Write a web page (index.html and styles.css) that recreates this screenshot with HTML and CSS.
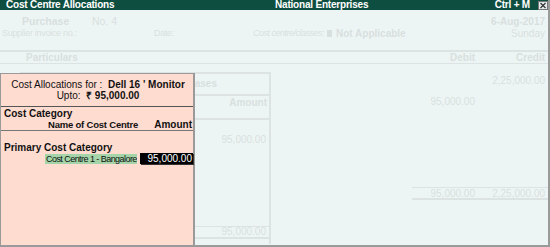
FILE: index.html
```html
<!DOCTYPE html>
<html lang="en">
<head>
    <meta charset="UTF-8">
    <title>Cost Centre Allocations</title>
    <link rel="stylesheet" href="styles.css">
</head>
<body>
    <div class="window">
        <div class="titlebar">
            <div class="tb-left">Cost Centre Allocations</div>
            <div class="tb-mid">National Enterprises</div>
            <div class="tb-right">
                <span>Ctrl + M</span>
                <span class="close-box">
                    <svg width="8" height="7" viewBox="0 0 8 7"><path d="M1.5 1 L6.5 6 M6.5 1 L1.5 6" stroke="#333" stroke-width="1.2"/></svg>
                </span>
            </div>
        </div>

        <!-- faded voucher behind the popup -->
        <div class="vch-head">
            <div class="vch-row">
                <span class="vch-type">Purchase</span>
                <span class="vch-no">No. 4</span>
                <span class="vch-date">6-Aug-2017</span>
            </div>
            <div class="vch-row small">
                <span class="supp">Supplier invoice no.:</span>
                <span class="date-lbl">Date:</span>
                <span class="cc-lbl">Cost centre/classes:</span>
                <span class="cc-box"></span>
                <span class="cc-val">Not Applicable</span>
                <span class="vch-day">Sunday</span>
            </div>
        </div>

        <div class="cols-head">
            <span class="col-part">Particulars</span>
            <span class="col-dr">Debit</span>
            <span class="col-cr">Credit</span>
        </div>

        <div class="vch-body">
            <div class="part-col">
                <div class="pb-box">
                    <div class="pb-head">Purchases</div>
                    <div class="pb-sub">Amount</div>
                    <div class="pb-main">95,000.00</div>
                    <div class="pb-foot">95,000.00</div>
                </div>
            </div>
            <div class="amt-cols">
                <div class="amt-row r1"><span class="dr"></span><span class="cr">2,25,000.00</span></div>
                <div class="amt-row r2"><span class="dr">95,000.00</span><span class="cr"></span></div>
                <div class="amt-row total"><span class="dr">95,000.00</span><span class="cr">2,25,000.00</span></div>
            </div>
        </div>

        <!-- allocation popup -->
        <div class="popup">
            <div class="pop-head">
                <div>Cost Allocations for : &nbsp;<b>Dell 16 ' Monitor</b></div>
                <div>Upto: &nbsp;<b>₹ 95,000.00</b></div>
            </div>
            <div class="pop-cols">
                <div class="pc-cat">Cost Category</div>
                <div class="pc-row"><span class="pc-name">Name of Cost Centre</span><span>Amount</span></div>
            </div>
            <div class="pop-body">
                <div class="cat-name">Primary Cost Category</div>
                <div class="alloc">
                    <span class="alloc-name">Cost Centre 1 - Bangalore</span>
                    <span class="alloc-amt">95,000.00</span>
                </div>
            </div>
        </div>
    </div>
</body>
</html>
```

FILE: styles.css
```css
:root {
    --title: #0e4e40;
    --bg: #edf5f4;
    --faded: #d9dfdf;
    --line: #dde3e3;
    --peach: #fedcd0;
    --border: #9a9a9a;
}

* {
    margin: 0;
    padding: 0;
    box-sizing: border-box;
}

body {
    font-family: "Liberation Sans", Arial, sans-serif;
    font-size: 10px;
    background: #fff;
    white-space: nowrap;
}

.window {
    position: relative;
    width: 550px;
    height: 247px;
    background: var(--bg);
    border-right: 2px solid var(--border);
    border-bottom: 2px solid var(--border);
    overflow: hidden;
}

.titlebar {
    height: 10px;
    background: var(--title);
    color: #fff;
    font-weight: 700;
    font-size: 10px;
    letter-spacing: -0.2px;
    line-height: 10px;
    display: flex;
    align-items: center;
    padding-left: 6px;
}

.tb-left {
    width: 269px;
}

.tb-mid {
    flex: 1;
}

.tb-right {
    display: flex;
    align-items: center;
    gap: 8px;
}

.close-box {
    flex-shrink: 0;
    display: flex;
    align-items: center;
    justify-content: center;
    width: 10px;
    height: 9px;
    background: #e4ecec;
    border: 1px solid #777;
}

/* faded voucher */
.vch-head {
    color: var(--faded);
    padding-top: 5px;
    height: 42px;
    border-bottom: 2px solid var(--line);
}

.vch-row {
    display: flex;
    align-items: center;
    height: 12px;
}

.vch-type {
    font-weight: 700;
    font-size: 10.5px;
    margin-left: 22px;
    width: 70px;
}

.vch-no {
    font-size: 10.5px;
}

.vch-date {
    margin-left: auto;
    margin-right: 3px;
    font-weight: 700;
}

.vch-row.small {
    font-size: 9px;
    letter-spacing: -0.3px;
}

.supp {
    margin-left: 2px;
    width: 152px;
}

.date-lbl {
    width: 99px;
}

.cc-lbl {
    font-style: italic;
    letter-spacing: -0.5px;
}

.cc-box {
    width: 5px;
    height: 7px;
    background: var(--faded);
    margin: 0 4px 0 3px;
}

.cc-val {
    font-weight: 700;
    font-size: 10px;
    letter-spacing: 0;
}

.vch-day {
    margin-left: auto;
    margin-right: 3px;
    font-size: 10px;
    letter-spacing: 0;
}

.cols-head {
    display: flex;
    height: 12px;
    align-items: center;
    color: var(--faded);
    font-weight: 700;
    border-bottom: 1px solid var(--line);
}

.col-part {
    margin-left: 26px;
    flex: 1;
}

.col-dr {
    width: 68px;
    text-align: right;
    padding-right: 5px;
}

.col-cr {
    width: 68px;
    text-align: right;
    padding-right: 3px;
}

.vch-body {
    display: flex;
    height: 180px;
    color: var(--faded);
}

.part-col {
    width: 412px;
    padding-top: 8px;
}

.pb-box {
    margin-left: 20px;
    width: 251px;
    height: 172px;
    border-top: 2px solid var(--line);
    border-right: 2px solid var(--line);
    display: flex;
    flex-direction: column;
}

.pb-head {
    height: 22px;
    line-height: 20px;
    font-weight: 700;
    text-align: right;
    padding-right: 52px;
    border-bottom: 2px solid var(--line);
}

.pb-sub {
    height: 24px;
    line-height: 14px;
    font-weight: 700;
    text-align: right;
    padding-right: 2px;
    border-bottom: 2px solid var(--line);
}

.pb-main {
    flex: 1;
    text-align: right;
    padding-right: 3px;
    padding-top: 14px;
}

.pb-foot {
    height: 13px;
    line-height: 10px;
    text-align: right;
    padding-right: 3px;
    border-top: 1px solid var(--line);
    border-bottom: 2px solid var(--line);
    margin-bottom: 5px;
}

.amt-cols {
    width: 136px;
    display: flex;
    flex-direction: column;
}

.amt-row {
    display: flex;
    height: 22px;
    line-height: 12px;
}

.amt-row span {
    width: 68px;
    text-align: right;
}

.amt-row .dr {
    padding-right: 5px;
}

.amt-row .cr {
    padding-right: 3px;
}

.amt-row.r1 {
    padding-top: 11px;
}

.amt-row.r2 {
    padding-top: 10px;
}

.amt-row.total {
    margin-top: 79px;
    height: 13px;
    line-height: 11px;
    border-top: 1px solid var(--line);
    border-bottom: 2px solid var(--line);
}

/* popup */
.popup {
    position: absolute;
    left: 0;
    top: 73px;
    width: 195px;
    height: 174px;
    background: var(--peach);
    border: 1px solid var(--border);
    border-right-width: 2px;
    color: #111;
}

.pop-head {
    height: 33px;
    padding-top: 5px;
    text-align: center;
    line-height: 11px;
    padding-left: 2px;
    border-bottom: 1px solid #555;
}

.pop-cols {
    height: 24px;
    font-weight: 700;
    border-bottom: 1px solid #777;
    line-height: 11px;
    padding-top: 1px;
}

.pc-cat {
    padding-left: 3px;
}

.pc-row {
    display: flex;
    justify-content: space-between;
    padding-left: 47px;
    padding-right: 1px;
}

.pc-name {
    font-size: 9.5px;
    letter-spacing: -0.2px;
}

.pop-body {
    padding-top: 11px;
}

.cat-name {
    font-weight: 700;
    padding-left: 3px;
    line-height: 11px;
}

.alloc {
    display: flex;
    align-items: center;
    padding-left: 44px;
    height: 11px;
}

.alloc-name {
    background: #a6d4a9;
    font-size: 9px;
    letter-spacing: -0.55px;
    overflow: hidden;
    width: 93px;
    height: 10px;
    line-height: 10px;
    padding-left: 1px;
}

.alloc-amt {
    margin-left: 3px;
    width: 53px;
    height: 11px;
    line-height: 11px;
    background: #000;
    color: #fff;
    text-align: right;
    padding-right: 1px;
    box-shadow: 1px 1px 0 #333;
}
```
